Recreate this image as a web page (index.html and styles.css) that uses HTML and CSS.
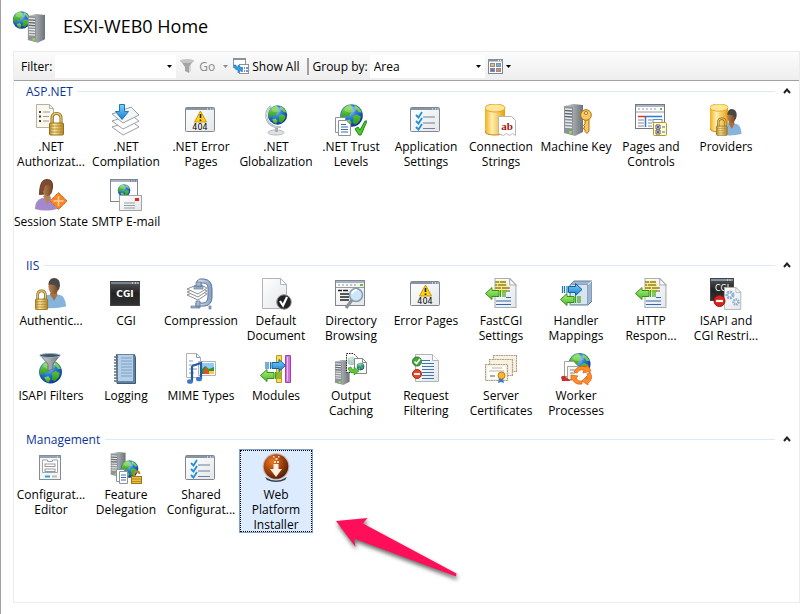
FILE: index.html
```html
<!DOCTYPE html>
<html lang="en">
<head>
<meta charset="utf-8">
<title>ESXI-WEB0 Home</title>
<link rel="stylesheet" href="styles.css">
</head>
<body>
<svg class="sprite" width="0" height="0" aria-hidden="true">
  <defs>
    <radialGradient id="sea" cx=".4" cy=".3" r=".75"><stop offset="0" stop-color="#9fd8fa"/><stop offset=".4" stop-color="#2f7fdd"/><stop offset="1" stop-color="#0a2a94"/></radialGradient>
    <linearGradient id="land" x2="0" y2="1"><stop offset="0" stop-color="#8be04a"/><stop offset="1" stop-color="#2c9a1c"/></linearGradient>
    <linearGradient id="gold"><stop offset="0" stop-color="#b98a26"/><stop offset=".35" stop-color="#fbe89c"/><stop offset="1" stop-color="#b58426"/></linearGradient>
    <linearGradient id="drum"><stop offset="0" stop-color="#f2ae1c"/><stop offset=".35" stop-color="#fff0b0"/><stop offset="1" stop-color="#e99c08"/></linearGradient>
    <linearGradient id="steel"><stop offset="0" stop-color="#d5d9dc"/><stop offset="1" stop-color="#6d7479"/></linearGradient>
    <linearGradient id="paper" x2="1" y2="1"><stop offset="0" stop-color="#fff"/><stop offset="1" stop-color="#e4e6e8"/></linearGradient>
    <linearGradient id="greenfill" x2="0" y2="1"><stop offset="0" stop-color="#b4ee84"/><stop offset="1" stop-color="#4cba22"/></linearGradient>
    <linearGradient id="bluefill" x2="0" y2="1"><stop offset="0" stop-color="#7fd0f8"/><stop offset="1" stop-color="#1a7fd0"/></linearGradient>
    <linearGradient id="skin"><stop offset="0" stop-color="#b98254"/><stop offset="1" stop-color="#6d4526"/></linearGradient>
    <linearGradient id="dark" x2="0" y2="1"><stop offset="0" stop-color="#555"/><stop offset=".5" stop-color="#222"/><stop offset="1" stop-color="#333"/></linearGradient>
    <linearGradient id="clamp"><stop offset="0" stop-color="#edf3fa"/><stop offset="1" stop-color="#7f9cc4"/></linearGradient>
    <radialGradient id="ember" cx=".35" cy=".3" r=".75"><stop offset="0" stop-color="#e8792a"/><stop offset=".5" stop-color="#a8460c"/><stop offset="1" stop-color="#501e04"/></radialGradient>

    <g id="globe">
      <circle r="11" fill="url(#sea)"/>
      <path d="M-9-5Q-6-10-1-10.500L1-8 0-6 2-4-1-2-2 1-5 0-7 2-10 3Q-11-1-9-5Z" fill="url(#land)"/>
      <path d="M3-10Q8-8 10-3L7-3 5-6 3-7ZM1 1 5-1 9 1 8 5 4 9 1 7 2 4Z" fill="url(#land)"/>
      <path d="M-6 5-2 4 0 7-2 10.500Q-5 9-6 5Z" fill="url(#land)"/>
      <ellipse cx="-1" cy="-6" rx="6" ry="3" fill="#fff" opacity=".25"/>
    </g>
    <g id="lock">
      <path d="M3 11V6Q3 1 7.500 1 12 1 12 6v5" fill="none" stroke="#8a6a22" stroke-width="3"/>
      <path d="M3 11V6Q3 1 7.500 1 12 1 12 6v5" fill="none" stroke="#e5c86c" stroke-width="1.400"/>
      <rect x=".5" y="10.500" width="14" height="12" rx="1" fill="url(#gold)" stroke="#9a7018"/>
      <path d="M1 13.500h13M1 16.500h13M1 19.500h13" stroke="#a8802a" stroke-width=".8"/>
    </g>
    <g id="person">
      <path d="M0 31Q-1 20 6 18l7-1 8 1q6 1 7 12-14 3-28 1Z" fill="currentColor"/>
      <path d="m9 17 5 7 4-6-1-4h-6Z" fill="#a9713f"/>
      <ellipse cx="13.500" cy="9" rx="6" ry="8" fill="url(#skin)"/>
      <path d="M7.500 7Q8 0 14 0q7 0 7 8-1 4-2 5Q18 6 7.500 7Z" fill="#4a4744"/>
    </g>
    <g id="page">
      <path d="M.5.500h14l6 6v21H.5Z" fill="url(#paper)" stroke="#a9adb0"/>
      <path d="M14.500.500v6h6Z" fill="#fff" stroke="#a9adb0"/>
    </g>
    <g id="window">
      <rect x=".5" y="3.500" width="29" height="24" rx="1" fill="url(#paper)" stroke="#7f8791"/>
      <path d="M1 5h28" stroke="#8895a4" stroke-width="2"/>
      <path d="M22 5h1M25 5h1M27.500 5h1" stroke="#fff"/>
    </g>
    <g id="tower">
      <path d="m1 2 9-2 10 1v27l-8 4L1 29Z" fill="url(#steel)"/>
      <path d="m1 2 9 1v28L1 29Z" fill="#8c9297"/>
      <path d="m2 5 7 .500M2 8l7 .500M2 11l7 .500M2 14l7 .500M2 17l7 .500M2 20l7 .500M2 23l7 .500" stroke="#e6eaed" stroke-width="1.400"/>
      <path d="m2 6.500 7 .500M2 9.500l7 .500M2 12.500l7 .500" stroke="#4c5358" stroke-width=".8"/>
      <path d="M6 27h3v2.500H6Z" fill="#8be23a"/>
    </g>
    <g id="barrel">
      <path d="M0 4v23q0 4 10 4t10-4V4Z" fill="url(#drum)"/>
      <ellipse cx="10" cy="4" rx="10" ry="4" fill="#ffe69a" stroke="#e8a820"/>
      <path d="M0 27q0 4 10 4t10-4" fill="none" stroke="#c87f08"/>
    </g>
    <g id="left-arrow">
      <path d="M.5 5.500 7-.500v3h7v6H7v3Z" fill="url(#greenfill)" stroke="#2f9416"/>
      <path d="M15.500 2v7M18 2v7M20 2v7" stroke="#3da31e" stroke-width="1.200"/>
    </g>
    <g id="right-arrow">
      <path d="M20.500 5.500 14-.500v3H7v6h7v3Z" fill="url(#bluefill)" stroke="#14609e"/>
      <path d="M5.500 2v7M3 2v7M1 2v7" stroke="#1d76b8" stroke-width="1.200"/>
    </g>
    <symbol id="checklist" viewBox="0 0 32 32">
      <use href="#window"/>
      <path d="M13 13h12M13 19h12M13 24.500h12" stroke="#6f7f9c"/>
      <path d="m6 11 2.500 2.500L12 8M6 17l2.500 2.500L12 14M6 23l2.500 2.500L12 20" fill="none" stroke="#2490d8" stroke-width="1.800"/>
    </symbol>
    <symbol id="error-window" viewBox="0 0 32 32">
      <use href="#window"/>
      <path d="m15.500 7 6 11h-12Z" fill="#ffd21a" stroke="#c89a08" stroke-linejoin="round"/>
      <path d="M15.500 10v4M15.500 15.500V17" stroke="#222" stroke-width="1.600"/>
      <text x="15" y="26" class="code">404</text>
    </symbol>
    <symbol id="response" viewBox="0 0 32 32">
      <use href="#page" x="9" y="0" transform="matrix(1.050 0 0 1.070 0 0)"/>
      <path d="M11 4h10M10 7h12M10 10h14M10 13h12" stroke="#ffe23c" stroke-width="2.400"/>
      <path d="M10 4h4m1 0h6M10 7h2m1 0h8M10 10h6m1 0h8M21 13h4" stroke="#555" stroke-width="1"/>
      <use href="#left-arrow" x="0" y="10"/>
      <path d="M11 23h15M11 26.500h15M21 19.500h5" stroke="#2868b4" stroke-width="1.200"/>
    </symbol>
  </defs>
</svg>

<main class="home">
  <header class="title">
    <svg class="icon" viewBox="0 0 32 32" aria-hidden="true">
      <use href="#globe" transform="translate(8.500 9) scale(.8)"/>
      <g transform="translate(14 3) scale(.9)"><use href="#tower"/></g>
    </svg>
    <h1>ESXI-WEB0 Home</h1>
  </header>

  <section class="panel">
    <form class="toolbar" onsubmit="return false">
      <label for="filter">Filter:</label>
      <span class="combo filter">
        <input id="filter" type="text">
        <svg class="caret" viewBox="0 0 5 3" aria-hidden="true"><path d="M0 0h5L2.500 3Z"/></svg>
      </span>
      <button type="button" class="tool go" disabled>
        <svg width="15" height="14" viewBox="0 0 15 14" aria-hidden="true"><path d="M0 1h14L9 8v6l-4-2V8Z" fill="#a5a5a5"/><ellipse cx="7" cy="2" rx="7" ry="2" fill="#c6c6c6"/><path d="m9 8 2-2v6l-2 2" fill="#d6d6d6"/></svg>
        <span>Go</span>
        <svg class="caret" viewBox="0 0 5 3" aria-hidden="true"><path d="M0 0h5L2.500 3Z"/></svg>
      </button>
      <button type="button" class="tool">
        <svg width="16" height="16" viewBox="0 0 16 16" aria-hidden="true"><rect x=".5" y=".5" width="12" height="9" fill="#fff" stroke="#8a939c"/><path d="M0 1h13" stroke="#8a939c" stroke-width="2"/><rect x="6.500" y="6.500" width="9" height="9" fill="#fff" stroke="#8a939c"/><path d="M8 10h2m1 0h1m1 0h2M8 13h2m1 0h1m1 0h2" stroke="#4a6fc0" stroke-width="1.500"/><path d="M1 7q0 5 4 5v3l5-4-5-4v2Q3 9 3 7Z" fill="#2f9de4" stroke="#1a6fb0" stroke-width=".5"/></svg>
        <span>Show All</span>
      </button>
      <span class="divider"></span>
      <label for="group-by">Group by:</label>
      <span class="combo group-by">
        <select id="group-by"><option>Area</option></select>
        <svg class="caret" viewBox="0 0 5 3" aria-hidden="true"><path d="M0 0h5L2.500 3Z"/></svg>
      </span>
      <button type="button" class="tool view" aria-label="View">
        <svg width="15" height="15" viewBox="0 0 15 15" aria-hidden="true"><rect x=".5" y=".5" width="14" height="14" fill="#fff" stroke="#7f8791"/><path d="M0 1.500h15" stroke="#8a939c" stroke-width="2"/><path d="M10 1.500h1m1 0h1" stroke="#fff"/><g stroke="#8a8f96"><rect x="2.500" y="4.500" width="4" height="3" fill="#e8c070"/><rect x="8.500" y="4.500" width="4" height="3" fill="#68b4f0"/><rect x="2.500" y="9.500" width="4" height="3" fill="#6a70d8"/><rect x="8.500" y="9.500" width="4" height="3" fill="#f08060"/></g></svg>
        <svg class="caret" viewBox="0 0 5 3" aria-hidden="true"><path d="M0 0h5L2.500 3Z"/></svg>
      </button>
    </form>

    <section class="group">
      <header class="group-head"><h2>ASP.NET</h2><span class="rule"></span>
        <button type="button" aria-label="Collapse ASP.NET"><svg width="8" height="6" viewBox="0 0 8 6"><path d="m1 5 3-3.500L7 5"/></svg></button></header>
      <ul class="features">
        <li><button type="button" class="feature"><svg class="icon" viewBox="0 0 32 32"><path d="M1.500.500h13l4 4v19h-17Z" fill="#fbf9ee" stroke="#b5b2a2"/><path d="M14.500.500v4h4" fill="none" stroke="#b5b2a2"/><path d="M4 8h2m-2 4.500h2M4 17h2" stroke="#444" stroke-width="2"/><path d="M8 8h7m-7 4.500h6M8 17h6" stroke="#999"/><use href="#lock" x="14" y="8.500"/></svg><span>.NET<br>Authorizat...</span></button></li>
        <li><button type="button" class="feature"><svg class="icon" viewBox="0 0 32 32"><g fill="#fff" stroke="#9a9fa3" stroke-linejoin="round"><path d="m2 23 19-6 8 6-16 8Z"/><path d="m2 17 19-6 8 6-16 8Z"/><path d="m2 10 19-7 8 8-16 8Z" fill="#f4f5f6"/></g><path d="M9.500.500h5v7h4L12 15.500 5.500 7.500h4Z" fill="url(#bluefill)" stroke="#1a78bc"/></svg><span>.NET<br>Compilation</span></button></li>
        <li><button type="button" class="feature"><svg class="icon"><use href="#error-window"/></svg><span>.NET Error<br>Pages</span></button></li>
        <li><button type="button" class="feature"><svg class="icon" viewBox="0 0 32 32"><ellipse cx="16" cy="28.500" rx="8" ry="2.500" fill="#dfe2e4" stroke="#b6babd"/><path d="M15 24h3v4h-3Z" fill="#a9aeb2"/><path d="M11 2Q4 8 7 16q4 8 14 7" fill="none" stroke="#9fa5aa" stroke-width="2"/><path d="M11 2Q4 8 7 16q4 8 14 7" fill="none" stroke="#eceff0" stroke-width=".8"/><use href="#globe" transform="translate(17.500 11) scale(.88)"/></svg><span>.NET<br>Globalization</span></button></li>
        <li><button type="button" class="feature"><svg class="icon" viewBox="0 0 32 32"><use href="#globe" transform="translate(16.500 11.500) scale(1.030)"/><path d="M.5 13.500h10v15H.5Z" fill="#fff" stroke="#8d9297"/><path d="M3.500 16.500h8l4 4v11h-12Z" fill="#fff" stroke="#8d9297"/><path d="M6 20.500h5m-5 2.500h7m-7 2.500h7M6 28h7" stroke="#3a6ea8"/><path d="m20 25 3-2 2 3 5-9h2l-6 14h-2Z" fill="#4cc82a" stroke="#1f8a12"/></svg><span>.NET Trust<br>Levels</span></button></li>
        <li><button type="button" class="feature"><svg class="icon"><use href="#checklist"/></svg><span>Application<br>Settings</span></button></li>
        <li><button type="button" class="feature"><svg class="icon" viewBox="0 0 32 32"><use href="#barrel"/><path d="M13.500 12.500h13l4 4v15l-3-2-3 2-3-2-3 2-5-2Z" fill="#fff" stroke="#b4b8bc"/><text x="22" y="26" class="ab">ab</text></svg><span>Connection<br>Strings</span></button></li>
        <li><button type="button" class="feature"><svg class="icon" viewBox="0 0 32 32"><use href="#tower" x="3"/><g fill="#f8c860" stroke="#b0700c"><path d="M25 15h4v12l-2 2.500-2-2v-2l-2-1 2-1.500-1.500-1.500 1.500-1.500Z"/><circle cx="26" cy="11" r="5.300"/><circle cx="26" cy="9" r="1.500" fill="#fff"/></g></svg><span>Machine Key</span></button></li>
        <li><button type="button" class="feature"><svg class="icon" viewBox="0 0 32 32"><rect x=".5" y=".5" width="29" height="24" fill="#fff" stroke="#6f7880"/><path d="M1 2h28" stroke="#a9b5c2" stroke-width="2"/><path d="M3 5h2m2 0h2m2 0h2m2 0h2m2 0h2" stroke="#999"/><path d="M1 8h28" stroke="#999"/><path d="M25 5h2" stroke="#6cbf2c" stroke-width="2"/><path d="M3 12.500h8" stroke="#e03020" stroke-width="1.500"/><path d="M11 12.500h16M10.500 13v10" stroke="#2a7ae0" stroke-width="1.500"/><path d="M3 16h6m-6 3h6m-6 3h6M13 16h4m-4 3h4m-4 3h4" stroke="#888"/><rect x="18" y="15.500" width="9" height="3" fill="#fff" stroke="#5c8fbc"/><rect x="18.500" y="18.500" width="13" height="13" rx="1" fill="#fffbd0" stroke="#b8962c"/><path d="M21 21h4v4h-4ZM21 26h4v4h-4Z" fill="#fff" stroke="#555"/><path d="M22 23h2m-2 5h2" stroke="#7050b0" stroke-width="2"/><path d="M27 23h3m-3 5h3" stroke="#3a6ea8"/></svg><span>Pages and<br>Controls</span></button></li>
        <li><button type="button" class="feature"><svg class="icon" viewBox="0 0 32 32"><use href="#barrel" transform="scale(.9)"/><g color="#86b4dc" transform="translate(12 5) scale(.7 .83)"><use href="#person"/></g><use href="#lock" transform="translate(6 14) scale(.77)"/></svg><span>Providers</span></button></li>
        <li><button type="button" class="feature"><svg class="icon" viewBox="0 0 32 32"><path d="M0 30q0-9 7-11l9 1q5 1 6 10-11 3-22 0Z" fill="#a389cc"/><path d="m8 17 4 8 4-6-2-5Z" fill="#b98254"/><path d="M4 16Q4 0 12 0q7 0 6 9l-3 6Z" fill="#6e4128"/><ellipse cx="12.500" cy="10" rx="5" ry="7" fill="url(#skin)"/><path d="M5 11Q5 1 12 1q5 0 5 6-5-2-7 0-1 6-4 9Z" fill="#7d4b2f"/><path d="m23.500 13.500 8.500 8.500-8.500 8.500L15 22Z" fill="#fa8420" stroke="#c04c08"/><path d="m23.500 13.500 8.500 8.500-8.500 8.500L15 22Z" fill="none" stroke="#fff" stroke-width=".5" stroke-dasharray="1 1"/><path d="M23.500 17v10m-5-5h10" stroke="#ffd0a0" stroke-width="1.500"/></svg><span>Session State</span></button></li>
        <li><button type="button" class="feature"><svg class="icon" viewBox="0 0 32 32"><rect x=".5" y=".5" width="27" height="22" fill="#fff" stroke="#7f8791"/><path d="M1 2h26" stroke="#a5b3c2" stroke-width="2"/><path d="M20 2h1m1.500 0h1M25 2h1" stroke="#456"/><use href="#globe" transform="translate(14 11.500) scale(.57)"/><rect x="9.500" y="16.500" width="22" height="15" fill="url(#paper)" stroke="#a2a6aa"/><path d="M14 24h11m-11 2.500h11M14 29h11" stroke="#9a9ea2"/><path d="M25 19h4v3h-4Z" fill="#e02818"/></svg><span>SMTP E-mail</span></button></li>
      </ul>
    </section>

    <section class="group">
      <header class="group-head"><h2>IIS</h2><span class="rule"></span>
        <button type="button" aria-label="Collapse IIS"><svg width="8" height="6" viewBox="0 0 8 6"><path d="m1 5 3-3.500L7 5"/></svg></button></header>
      <ul class="features">
        <li><button type="button" class="feature"><svg class="icon" viewBox="0 0 32 32"><g color="#86b4dc" transform="translate(7 0) scale(.86 .95)"><use href="#person"/></g><use href="#lock" transform="translate(0 12) scale(.87)"/></svg><span>Authentic...</span></button></li>
        <li><button type="button" class="feature"><svg class="icon" viewBox="0 0 32 32"><rect x=".5" y="3.500" width="29" height="24" fill="url(#dark)" stroke="#444"/><path d="M1 5h28" stroke="#778492" stroke-width="2"/><path d="M22 5h1M25 5h1M27.500 5h1" stroke="#fff"/><text x="15" y="19" class="cgi">CGI</text></svg><span>CGI</span></button></li>
        <li><button type="button" class="feature"><svg class="icon" viewBox="0 0 32 32"><path d="M12 7V3q2-3 7-2 8 1 8 10v8q0 8-7 9h-9v-3h7q5 0 5-7v-8q0-5-5-5h-2v5Z" fill="url(#clamp)" stroke="#5d7596"/><g fill="#fff" stroke="#8a8f94" stroke-linejoin="round"><path d="m2 17 12-5 8 4-9 6Z"/><path d="m2 14 12-5 8 4-9 6Z"/><path d="m2 11 12-5 8 4-9 6Z"/></g><path d="M11 4h5v5h-5ZM9 8h9v3H9ZM11 23h4v6h-4ZM6 28h9v2H6ZM24 28h2v3h-2Z" fill="#a4b9d4" stroke="#5d7596" stroke-width=".7"/></svg><span>Compression</span></button></li>
        <li><button type="button" class="feature"><svg class="icon" viewBox="0 0 32 32"><path d="M2.500.500h18l6 6v24h-24Z" fill="url(#paper)" stroke="#b0b4b7"/><path d="M20.500.500v6h6Z" fill="#fff" stroke="#b0b4b7"/><circle cx="24" cy="24" r="7.300" fill="#222" stroke="#999"/><path d="m20 23 3 4.500L27 19" fill="none" stroke="#fff" stroke-width="2.200"/></svg><span>Default<br>Document</span></button></li>
        <li><button type="button" class="feature"><svg class="icon" viewBox="0 0 32 32"><rect x=".5" y="2.500" width="29" height="25" fill="url(#paper)" stroke="#7f8791"/><path d="M1 4h28" stroke="#a5b3c2" stroke-width="2"/><path d="M3 7h2m2 0h2m2 0h2m2 0h2m2 0h2" stroke="#999"/><path d="M1 9.500h28" stroke="#999"/><path d="M25 7h3" stroke="#6cbf2c" stroke-width="2"/><path d="M3 12.500h4m1 0h5M5 16h9m-9 3h9m-9 3h9" stroke="#222" stroke-width="1.300"/><path d="m17 22-6 8" stroke="#8a9098" stroke-width="3"/><circle cx="21" cy="17" r="6.500" fill="#c9e6fa" stroke="#8b9aaa" stroke-width="1.500"/><path d="M17 16q1-4 5-4" stroke="#fff" stroke-width="2" fill="none"/></svg><span>Directory<br>Browsing</span></button></li>
        <li><button type="button" class="feature"><svg class="icon"><use href="#error-window"/></svg><span>Error Pages</span></button></li>
        <li><button type="button" class="feature"><svg class="icon"><use href="#response"/></svg><span>FastCGI<br>Settings</span></button></li>
        <li><button type="button" class="feature"><svg class="icon" viewBox="0 0 32 32"><path d="m10 7 4-4h18v20l-4 4H10Z" fill="#9db5cf" stroke="#6681a0"/><path d="M10.500 6.500h17v20h-17Z" fill="#d8e4f0" stroke="#8ba2bd"/><path d="m28 6.500 3.500-3" stroke="#fff"/><use href="#right-arrow" x="1.500" y="6"/><use href="#left-arrow" x="0" y="16"/></svg><span>Handler<br>Mappings</span></button></li>
        <li><button type="button" class="feature"><svg class="icon"><use href="#response"/></svg><span>HTTP<br>Respon...</span></button></li>
        <li><button type="button" class="feature"><svg class="icon" viewBox="0 0 32 32"><rect x=".5" y=".5" width="23" height="22" fill="url(#dark)" stroke="#444"/><path d="M1 2h22" stroke="#8492a1" stroke-width="2"/><path d="M17 2h1m1.500 0h1" stroke="#fff"/><text x="12" y="13" class="cgi small">CGI</text><g transform="translate(14 9) scale(.82)"><use href="#page"/></g><circle cx="20" cy="17" r="3" fill="none" stroke="#8fb0cf" stroke-width="3" stroke-dasharray="2 .7"/><circle cx="26" cy="24" r="2.500" fill="none" stroke="#8fb0cf" stroke-width="2.500" stroke-dasharray="1.500 .7"/><circle cx="9.500" cy="23" r="5.500" fill="#d9231c" stroke="#a31410"/><path d="M6 23h7" stroke="#fff" stroke-width="2.200"/></svg><span>ISAPI and<br>CGI Restri...</span></button></li>
        <li><button type="button" class="feature"><svg class="icon" viewBox="0 0 32 32"><use href="#globe" transform="translate(15.500 19) scale(1.040)"/><path d="M5 2h20l-7 9v5l-5 2v-7Z" fill="url(#steel)" stroke="#687580"/><ellipse cx="15" cy="2.500" rx="10" ry="2" fill="#3f5868" stroke="#a4b0b8"/></svg><span>ISAPI Filters</span></button></li>
        <li><button type="button" class="feature"><svg class="icon" viewBox="0 0 32 32"><path d="M6.500 1.500h18l1 3v26H7Z" fill="#5f7f9f" stroke="#3f5c7c"/><path d="M7.500 1.500h16v27h-16Z" fill="#b5cfe9" stroke="#6485a5"/><path d="M11 5h11m-11 3h11m-11 3h11m-11 3h11m-11 3h11m-11 3h11m-11 3h11" stroke="#7c9fc2"/><path d="M4 4h4M4 7h4m-4 3h4m-4 3h4m-4 3h4m-4 3h4m-4 3h4m-4 3h4m-4 3h4" stroke="#66707a" stroke-width="1.400"/></svg><span>Logging</span></button></li>
        <li><button type="button" class="feature"><svg class="icon" viewBox="0 0 32 32"><path d="M1.500.500h10l4 4v20h-14Z" fill="#fff" stroke="#b0b4b7"/><path d="M11.500.500v4h4M4 8h4m-4 4h8m-8 4h8m-8 4h5" fill="none" stroke="#7e9ab8"/><path d="M13.500 8.500h17v14h-17Z" fill="#fff" stroke="#b0b4b7"/><path d="M15 10h14v11H15Z" fill="#90ccfa"/><path d="m15 18 5-5 4 3 5-2v7H15Z" fill="#2f9434"/><path d="m18 21 3-8 4 8Z" fill="#d8542c"/><path d="M24 18h5v3h-5Z" fill="#f4ce3c"/><path d="m7 13 9-3v16M7 13v15" fill="none" stroke="#285aa4" stroke-width="2.200"/><ellipse cx="5" cy="28.500" rx="3" ry="2.300" fill="#3d77c6"/><ellipse cx="14" cy="26" rx="3" ry="2.300" fill="#3d77c6"/></svg><span>MIME Types</span></button></li>
        <li><button type="button" class="feature"><svg class="icon" viewBox="0 0 32 32"><path d="M16.500 2.500h5v27h-5Z" fill="#f9dc54" stroke="#bd9b1c"/><path d="M25.500 2.500h5v27h-5Z" fill="#cf74d8" stroke="#9c44a8"/><path d="M27.500 4v24" stroke="#ecb8f0"/><use href="#right-arrow" x="5" y="7"/><use href="#left-arrow" x="0" y="17"/></svg><span>Modules</span></button></li>
        <li><button type="button" class="feature"><svg class="icon" viewBox="0 0 32 32"><g transform="translate(-1 7) scale(.78)"><use href="#tower"/></g><path d="M11.500.500h7l4 4v15h-11Z" fill="#fff" stroke="#222" stroke-dasharray="1.500 1"/><use href="#globe" transform="translate(16.500 8) scale(.36)" opacity=".4"/><path d="M19.500 5.500h8l4 4v11h-12Z" fill="#fff" stroke="#85898c"/><path d="M27.500 5.500v4h4" fill="none" stroke="#85898c"/><use href="#globe" transform="translate(25.500 13.500) scale(.34)"/><path d="m13 15 3-1q1 3 3 3v-3l5 4-5 4v-2q-5 0-6-5Z" fill="#60c737" stroke="#2e8a18" stroke-width=".6"/></svg><span>Output<br>Caching</span></button></li>
        <li><button type="button" class="feature"><svg class="icon" viewBox="0 0 32 32"><path d="M5.500 1.500h17l6 6v21h-23Z" fill="url(#paper)" stroke="#b0b4b7"/><path d="M22.500 1.500v6h6" fill="#fff" stroke="#b0b4b7"/><path d="M12 7.500h8M12 10.500h12m-12 3h12m-12 3h12m-12 3h12m-12 3h12m-12 3h12" stroke="#3a78b4"/><circle cx="7" cy="8.500" r="4.500" fill="#43a83c" stroke="#257a22"/><path d="m4.500 8.500 2 2L10 6" fill="none" stroke="#fff" stroke-width="1.600"/><circle cx="7" cy="21" r="4.500" fill="#e2492c" stroke="#b02810"/><path d="M4 21h6" stroke="#fff" stroke-width="1.800"/></svg><span>Request<br>Filtering</span></button></li>
        <li><button type="button" class="feature"><svg class="icon" viewBox="0 0 32 32"><g fill="#f7f2e2" stroke="#b1a287" stroke-width="1.200" stroke-dasharray="2 .5"><path d="M8.500 2.500h23v16h-23Z"/><path d="M4.500 6.500h23v16h-23Z"/><path d="M.5 11.500h22v16H.5Z"/></g><path d="M2.500 13.500h18v12h-18Z" fill="#fff"/><path d="M7 15h10M4 18h15" stroke="#bcb3a0"/><path d="M5 23h5" stroke="#aaa" stroke-width="2"/><path d="m14 25-1 5 3-1 3 1-1-5Z" fill="#2f7cd8"/><circle cx="16.500" cy="22.500" r="3.500" fill="#f9b832" stroke="#c07c0c"/></svg><span>Server<br>Certificates</span></button></li>
        <li><button type="button" class="feature"><svg class="icon" viewBox="0 0 32 32"><use href="#globe" transform="translate(19.500 11)"/><path d="M4.500 8.500h9l4 4v11h-13Z" fill="#fff" stroke="#a3a3a3"/><path d="M7.500 13.500h12v13h-12Z" fill="#f6f6f4" stroke="#a3a3a3"/><path d="M10 17h7m-7 3h7" stroke="#888"/><path d="M1 24q3-3 6 1l4 3H2Z" fill="#c9322a"/><circle cx="21.500" cy="22" r="7" fill="#fff"/><path d="M14 19q4-8 12-5l1-3 4 7-8 2 1-3q-5-1-7 3ZM30 19q4 7-2 11v2l-6-4 5-5v3q2-2 0-5ZM11 22l7 1-2 2q2 4 6 3v3q-7 1-9-4h-2Z" fill="#ff8c28" stroke="#d45a08" stroke-width=".7"/></svg><span>Worker<br>Processes</span></button></li>
      </ul>
    </section>

    <section class="group">
      <header class="group-head"><h2>Management</h2><span class="rule"></span>
        <button type="button" aria-label="Collapse Management"><svg width="8" height="6" viewBox="0 0 8 6"><path d="m1 5 3-3.500L7 5"/></svg></button></header>
      <ul class="features">
        <li><button type="button" class="feature"><svg class="icon" viewBox="0 0 32 32"><rect x="4.500" y="3.500" width="21" height="24" fill="#f5f6f7" stroke="#858c94"/><path d="M5 5h20" stroke="#94a2b1" stroke-width="2"/><path d="M22 5h1" stroke="#fff"/><path d="M7.500 9.500V8h5v1.500h5V8h5v12.500h-15Z" fill="#fff" stroke="#a0a5aa"/><rect x="10" y="12" width="10" height="2.500" fill="#fff" stroke="#999"/><rect x="10" y="17" width="10" height="2.500" fill="#fff" stroke="#999"/><path d="M10 24.500h5" stroke="#1aa8e8" stroke-width="2"/><path d="M17 24.500h5" stroke="#bbb" stroke-width="2"/></svg><span>Configurat...<br>Editor</span></button></li>
        <li><button type="button" class="feature"><svg class="icon" viewBox="0 0 32 32"><g transform="scale(.78)"><use href="#tower"/></g><use href="#globe" transform="translate(19.500 17) scale(.8)"/><path d="M6.500 17.500h8v12h-8Z" fill="#fff" stroke="#8d9297"/><path d="M9.500 19.500h8v12h-8Z" fill="#fff" stroke="#8d9297"/><path d="M11 23h5m-5 2.500h5M11 28h5" stroke="#3a6ea8"/><path d="M24 25v-3q0-2.500 3-2.500 2.500 0 2.500 2.500" fill="none" stroke="#b48a24" stroke-width="1.800"/><rect x="21.500" y="24.500" width="10" height="7" fill="#edbd3c" stroke="#a0761a"/><path d="M22 27h9m-9 2.500h9" stroke="#a87e20" stroke-width=".8"/></svg><span>Feature<br>Delegation</span></button></li>
        <li><button type="button" class="feature"><svg class="icon"><use href="#checklist"/></svg><span>Shared<br>Configurat...</span></button></li>
        <li class="pointed"><button type="button" class="feature selected"><svg class="icon" viewBox="0 0 32 32"><path d="M5 25q11 7 22 0l-2 3q-9 4-18 0Z" fill="#333e48"/><circle cx="16" cy="14.500" r="13.500" fill="#c9bcc0"/><circle cx="16" cy="14.500" r="12.300" fill="url(#ember)"/><path d="M13.500 12h5v5h3.500l-6 8-6-8h3.500Z" fill="#fbeee0"/><path d="M14 9h2v2h-2ZM17 9h2v2h-2ZM15.500 6h2v2h-2ZM13 4h1.500v1.500H13ZM18 4h1.500v1.500H18Z" fill="#f4d9c0"/></svg><span>Web<br>Platform<br>Installer</span></button>
          <svg class="pointer" width="128" height="68" viewBox="0 0 128 68" aria-hidden="true"><path d="M0 5 31.500 2 27 7.500 120.500 57.500 120 60.500 18 22.500 19.500 31Z"/></svg></li>
      </ul>
    </section>
  </section>
</main>
</body>
</html>
```
FILE: styles.css
```css
* {
  box-sizing: border-box;
}

body {
  margin: 0;
  background: #fff;
  color: #000;
  font: 12px/15px "Open Sans", "Noto Sans", sans-serif;
}

button,
input,
select {
  margin: 0;
  padding: 0;
  border: 0;
  background: none;
  color: inherit;
  font: inherit;
}

.sprite {
  position: absolute;
}

.home {
  display: flex;
  flex-direction: column;
  min-height: 100vh;
  padding: 0 11px 11px 12px;
  border-left: 1px solid #a0a0a0;
}

.title {
  display: flex;
  align-items: center;
  gap: 18px;
  height: 51px;
  padding-top: 3px;
}

.title h1 {
  margin: 0;
  padding-bottom: 3px;
  font-size: 18px;
  font-weight: 400;
  line-height: 24px;
}

.icon {
  display: block;
  flex: none;
  width: 32px;
  height: 32px;
}

.panel {
  flex: 1;
  border: 1px solid #ececec;
}

/* Toolbar */
.toolbar {
  display: flex;
  align-items: center;
  height: 29px;
  padding-left: 7px;
  border-bottom: 1px solid #a0a0a0;
  background: linear-gradient(#fcfcfc, #eee);
}

.combo {
  display: flex;
  align-items: center;
  height: 23px;
  padding-right: 4px;
  background: #fff;
}

.combo input,
.combo select {
  flex: 1;
  min-width: 0;
  height: 23px;
  padding-left: 4px;
  appearance: none;
  outline: 0;
}

.filter {
  width: 121px;
  margin-left: 3px;
}

.group-by {
  width: 115px;
  margin-left: 2px;
}

.caret {
  flex: none;
  width: 5px;
  height: 3px;
  fill: currentColor;
}

.tool {
  display: flex;
  align-items: center;
  gap: 3px;
}

.go {
  gap: 4px;
  margin: 0 5px 0 4px;
  color: #8a8a8a;
}

.go .caret {
  margin-left: 4px;
}

.view {
  margin-left: 3px;
}

.divider {
  width: 2px;
  height: 17px;
  margin: 0 4px 0 7px;
  background: #a0a0a0;
}

/* Feature groups */
.group {
  margin-bottom: 4px;
}

.group-head {
  display: flex;
  align-items: center;
  height: 20px;
  padding: 0 8px 0 12px;
}

.group-head h2 {
  margin: 0;
  color: #0a3399;
  font-size: 12px;
  font-weight: 400;
}

.rule {
  flex: 1;
  height: 1px;
  margin: 0 8px 0 5px;
  background: #dbeaf6;
}

.group-head svg {
  display: block;
  fill: none;
  stroke: #222;
  stroke-width: 2;
}

.features {
  display: grid;
  grid-template-columns: repeat(auto-fill, 75px);
  grid-auto-rows: minmax(75px, auto);
  margin: 0;
  padding: 0;
  list-style: none;
}

.feature {
  display: flex;
  flex-direction: column;
  align-items: center;
  gap: 3px;
  width: 74px;
  padding: 2px 0 0;
  border: 1px solid transparent;
}

.feature span {
  text-align: center;
  white-space: nowrap;
}

.feature.selected {
  border-color: #7da2ce;
  background: #ddebff;
  outline: 1px dotted #000;
  outline-offset: -2px;
}

.code,
.cgi,
.ab {
  text-anchor: middle;
  font-family: "DejaVu Sans", sans-serif;
}

.code {
  font-size: 8px;
}

.cgi {
  fill: #fff;
  font-size: 9px;
  font-weight: 700;
}

.cgi.small {
  font-size: 8px;
  font-weight: 400;
}

.ab {
  fill: #a01818;
  font: 700 11px "Liberation Serif", serif;
}

.pointed {
  position: relative;
}

.pointer {
  position: absolute;
  top: 67px;
  left: 97px;
  fill: #ff0f5a;
  filter: drop-shadow(1px 3px 2px rgba(0, 0, 0, 0.6));
}
```
